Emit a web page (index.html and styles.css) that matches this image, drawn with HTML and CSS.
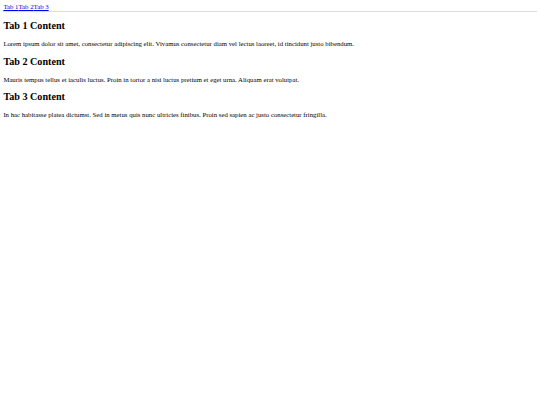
FILE: index.html
```html
<!DOCTYPE html>
<html lang="en">
<head>
<meta charset="utf-8">
<title>Tabs</title>
<link rel="stylesheet" href="styles.css">
</head>
<body>
<nav class="tabs"><a href="#tab1" class="tab">Tab 1</a><a href="#tab2" class="tab">Tab 2</a><a href="#tab3" class="tab">Tab 3</a></nav>
<section class="panel" id="tab1">
<h2 class="panel-title">Tab 1 Content</h2>
<p class="panel-text">Lorem ipsum dolor sit amet, consectetur adipiscing elit. Vivamus consectetur diam vel lectus laoreet, id tincidunt justo bibendum.</p>
</section>
<section class="panel" id="tab2">
<h2 class="panel-title">Tab 2 Content</h2>
<p class="panel-text">Mauris tempus tellus et iaculis luctus. Proin in tortor a nisi luctus pretium et eget urna. Aliquam erat volutpat.</p>
</section>
<section class="panel" id="tab3">
<h2 class="panel-title">Tab 3 Content</h2>
<p class="panel-text">In hac habitasse platea dictumst. Sed in metus quis nunc ultricies finibus. Proin sed sapien ac justo consectetur fringilla.</p>
</section>
</body>
</html>
```

FILE: styles.css
```css
html, body {
  background: #ffffff;
}
body {
  font-family: "Liberation Serif", "Times New Roman", serif;
  font-size: 6.76px;
  line-height: 1.11;
  margin: 0.5em;
  color: #000000;
}
.tabs {
  border-bottom: 1px solid #dddddd;
}
.tab {
  color: #0000ee;
  text-decoration: underline;
}
.panel-title {
  font-size: 1.5em;
  font-weight: bold;
  margin: 0.83em 0;
}
.panel-text {
  margin: 1em 0;
}
```
